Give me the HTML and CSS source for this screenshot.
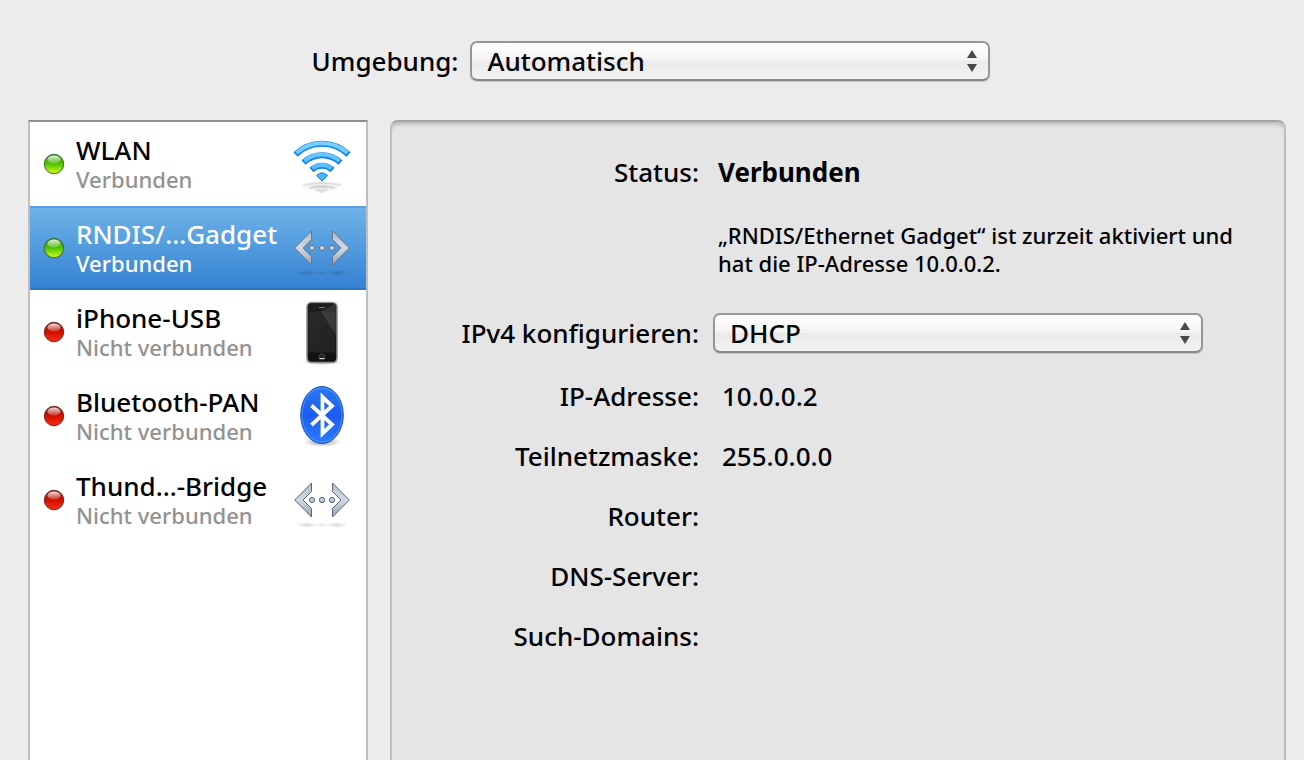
FILE: index.html
```html
<!DOCTYPE html>
<html lang="de">
<head>
<meta charset="utf-8">
<title>Netzwerk</title>
<link rel="stylesheet" href="styles.css">
</head>
<body>
<svg class="defs" aria-hidden="true">
  <defs>
    <linearGradient id="green" x1="0" y1="0" x2="0" y2="1"><stop offset="0" stop-color="#2f8d0c"/><stop offset=".5" stop-color="#4fc400"/><stop offset="1" stop-color="#d4ff1c"/></linearGradient>
    <linearGradient id="red" x1="0" y1="0" x2="0" y2="1"><stop offset="0" stop-color="#8e1410"/><stop offset=".5" stop-color="#d01000"/><stop offset="1" stop-color="#ff2a10"/></linearGradient>
    <linearGradient id="gloss" x1="0" y1="0" x2="0" y2="1"><stop offset="0" stop-color="#fff" stop-opacity=".85"/><stop offset="1" stop-color="#fff" stop-opacity=".15"/></linearGradient>
    <linearGradient id="steel" x1="0" y1="0" x2="0" y2="1"><stop offset="0" stop-color="#b4bdcb"/><stop offset=".5" stop-color="#d3d9e3"/><stop offset="1" stop-color="#98a4b8"/></linearGradient>
    <linearGradient id="sky" gradientUnits="userSpaceOnUse" x1="0" y1="13" x2="0" y2="53"><stop offset="0" stop-color="#7fd0ff"/><stop offset="1" stop-color="#46b4ff"/></linearGradient>
    <linearGradient id="blue" x1="0" y1="0" x2="0" y2="1"><stop offset="0" stop-color="#2b7af2"/><stop offset=".5" stop-color="#1c5cf0"/><stop offset="1" stop-color="#2e7dff"/></linearGradient>
    <linearGradient id="glass" x1="0" y1="0" x2="1" y2="1"><stop offset="0" stop-color="#2a2a2c"/><stop offset="1" stop-color="#202022"/></linearGradient>
    <radialGradient id="shade"><stop offset="0" stop-color="#000" stop-opacity=".4"/><stop offset="1" stop-color="#000" stop-opacity="0"/></radialGradient>
    <symbol id="dot-on" viewBox="0 0 24 24">
      <ellipse cx="12" cy="14" rx="11" ry="10" fill="url(#shade)"/>
      <circle cx="12" cy="12" r="9.7" fill="url(#green)" stroke="#3c6f2c"/>
      <ellipse cx="12" cy="7.5" rx="6.5" ry="4" fill="url(#gloss)"/>
    </symbol>
    <symbol id="dot-off" viewBox="0 0 24 24">
      <ellipse cx="12" cy="14" rx="11" ry="10" fill="url(#shade)"/>
      <circle cx="12" cy="12" r="9.7" fill="url(#red)" stroke="#6d2b26"/>
      <ellipse cx="12" cy="7.5" rx="6.5" ry="4" fill="url(#gloss)"/>
    </symbol>
    <symbol id="ethernet" viewBox="0 0 64 72">
      <ellipse cx="17" cy="61" rx="11" ry="3" fill="url(#shade)" opacity=".4"/>
      <ellipse cx="47" cy="61" rx="11" ry="3" fill="url(#shade)" opacity=".4"/>
      <ellipse cx="32" cy="61" rx="7" ry="2" fill="url(#shade)" opacity=".3"/>
      <g fill="url(#steel)" stroke="currentColor">
        <path d="M4.700 36 21.500 19v8.500L13 36l8.500 8.500V53Z"/>
        <path d="M59.300 36 42.500 19v8.500L51 36l-8.500 8.500V53Z"/>
        <circle cx="22" cy="36" r="2.600"/><circle cx="32" cy="36" r="2.600"/><circle cx="42" cy="36" r="2.600"/>
      </g>
    </symbol>
    <symbol id="updown" viewBox="0 0 12 24">
      <path fill="#484848" d="M6 1l5 8H1ZM6 23l5-8H1Z"/>
    </symbol>
  </defs>
</svg>

<main class="window">
  <div class="toolbar">
    <label for="location">Umgebung:</label>
    <div class="popup popup-location">
      <select id="location"><option>Automatisch</option></select>
      <svg class="popup-arrows" aria-hidden="true"><use href="#updown"/></svg>
    </div>
  </div>

  <div class="content">
    <nav class="services" aria-label="Dienste">
      <button class="service" type="button">
        <svg class="service-dot"><use href="#dot-on"/></svg>
        <span class="service-text"><span class="service-name">WLAN</span><span class="service-state">Verbunden</span></span>
        <svg class="service-icon" viewBox="0 0 64 72">
          <ellipse cx="32" cy="59" rx="20" ry="5" fill="url(#shade)" opacity=".3"/>
          <g fill="none" stroke="#000" opacity=".1">
            <path d="M13 57q19-4 38 0" stroke-width="2"/><path d="M19 60q13-3 26 0" stroke-width="2"/><path d="M26 62h12l-6 3Z" fill="#000"/>
          </g>
          <g fill="none" stroke="#0a84f5" stroke-width="6">
            <path d="M5.500 26.500A38 38 0 0 1 58.500 26.500"/><path d="M13.500 34.500A27 27 0 0 1 50.500 34.500"/><path d="M21.500 42A15 15 0 0 1 42.500 42"/>
          </g>
          <g fill="none" stroke="url(#sky)" stroke-width="4">
            <path d="M6.500 25A38 38 0 0 1 57.500 25"/><path d="M14.500 33A27 27 0 0 1 49.500 33"/><path d="M22.500 40.500A15 15 0 0 1 41.500 40.500"/>
          </g>
          <path d="M26.500 47.500Q32 42 37.500 47.500L32 53Z" fill="#46b4ff" stroke="#0a84f5"/>
        </svg>
      </button>
      <button class="service is-selected" type="button" aria-current="true">
        <svg class="service-dot"><use href="#dot-on"/></svg>
        <span class="service-text"><span class="service-name">RNDIS/…Gadget</span><span class="service-state">Verbunden</span></span>
        <svg class="service-icon"><use href="#ethernet"/></svg>
      </button>
      <button class="service" type="button">
        <svg class="service-dot"><use href="#dot-off"/></svg>
        <span class="service-text"><span class="service-name">iPhone-USB</span><span class="service-state">Nicht verbunden</span></span>
        <svg class="service-icon" viewBox="0 0 64 72">
          <ellipse cx="32" cy="66" rx="20" ry="3" fill="url(#shade)"/>
          <rect x="17" y="6.500" width="30" height="60" rx="4.500" fill="#111" stroke="#8d908d" stroke-width="1.600"/>
          <rect x="18" y="7.500" width="28" height="8" rx="3" fill="#1c1c1d"/>
          <rect x="18.500" y="15.500" width="27" height="41" fill="url(#glass)"/>
          <path d="M44 8h2v31L31 15.500Z" fill="#fff" opacity=".1"/>
          <path d="M29 11.500h6" stroke="#777"/>
          <circle cx="32" cy="61" r="3" fill="#222" stroke="#444"/>
          <path d="M29.500 62.500h5" stroke="#ccc"/>
        </svg>
      </button>
      <button class="service" type="button">
        <svg class="service-dot"><use href="#dot-off"/></svg>
        <span class="service-text"><span class="service-name">Bluetooth-PAN</span><span class="service-state">Nicht verbunden</span></span>
        <svg class="service-icon" viewBox="0 0 64 72">
          <ellipse cx="32" cy="62" rx="19" ry="5" fill="url(#shade)"/>
          <ellipse cx="32" cy="35" rx="21.300" ry="28.500" fill="url(#blue)" stroke="#1a58c8"/>
          <ellipse cx="32" cy="35" rx="20" ry="27" fill="none" stroke="#6ba6ff" opacity=".6"/>
          <path d="M21.500 25.500 42 44.500 32.500 53.500V17L42 26 21.500 45" fill="none" stroke="#fff" stroke-width="3.800"/>
        </svg>
      </button>
      <button class="service" type="button">
        <svg class="service-dot"><use href="#dot-off"/></svg>
        <span class="service-text"><span class="service-name">Thund…-Bridge</span><span class="service-state">Nicht verbunden</span></span>
        <svg class="service-icon"><use href="#ethernet"/></svg>
      </button>
    </nav>

    <section class="panel">
      <div class="status">
        <span class="label">Status:</span>
        <div class="status-text">
          <strong>Verbunden</strong>
          <p>„RNDIS/Ethernet Gadget“ ist zurzeit aktiviert und hat die IP-Adresse 10.0.0.2.</p>
        </div>
      </div>
      <div class="row">
        <label class="label" for="ipv4">IPv4 konfigurieren:</label>
        <div class="popup popup-ipv4">
          <select id="ipv4"><option>DHCP</option></select>
          <svg class="popup-arrows" aria-hidden="true"><use href="#updown"/></svg>
        </div>
      </div>
      <dl class="details">
        <div class="row"><dt class="label">IP-Adresse:</dt><dd>10.0.0.2</dd></div>
        <div class="row"><dt class="label">Teilnetzmaske:</dt><dd>255.0.0.0</dd></div>
        <div class="row"><dt class="label">Router:</dt><dd></dd></div>
        <div class="row"><dt class="label">DNS-Server:</dt><dd></dd></div>
        <div class="row"><dt class="label">Such-Domains:</dt><dd></dd></div>
      </dl>
    </section>
  </div>
</main>
</body>
</html>
```
FILE: styles.css
```css
* { box-sizing: border-box; }

body {
  margin: 0;
  background: #ececec;
  color: #000;
  font: 500 26px/32px "Noto Sans", "Open Sans", sans-serif;
}

.defs { position: absolute; width: 0; height: 0; }

.window {
  display: flex;
  flex-direction: column;
  min-height: 100vh;
}

.toolbar {
  display: flex;
  align-items: center;
  justify-content: center;
  gap: 12px;
  padding: 41px 2px 39px 0;
}

.popup { position: relative; }
.popup-location { width: 520px; }
.popup-ipv4 { width: 490px; margin-left: -5px; }

.popup select {
  display: block;
  width: 100%;
  height: 40px;
  padding: 0 40px 0 15px;
  appearance: none;
  border: 2px solid #979797;
  border-bottom-color: #868686;
  border-radius: 7px;
  background: linear-gradient(#fff, #f3f3f3 50%, #eaeaea 50%, #f2f2f2);
  box-shadow: 0 1px 1px rgba(0, 0, 0, .15);
  color: inherit;
  font: inherit;
}

.popup-arrows {
  position: absolute;
  top: 8px;
  right: 12px;
  width: 12px;
  height: 24px;
  pointer-events: none;
}

.content {
  display: flex;
  flex: 1;
  gap: 22px;
  padding: 0 18px 0 28px;
}

.services {
  flex: none;
  width: 340px;
  border: solid #bebebe;
  border-width: 2px 2px 0;
  border-top-color: #8e8e8e;
  background: #fff;
}

.service {
  display: flex;
  align-items: center;
  width: 100%;
  height: 84px;
  padding: 0 12px;
  border: 0;
  background: none;
  color: #56657f;
  font: inherit;
  text-align: left;
}

.service-dot { flex: none; width: 24px; height: 24px; }
.service-icon { flex: none; width: 64px; height: 72px; }

.service-text {
  display: flex;
  flex: 1;
  flex-direction: column;
  min-width: 0;
  padding-left: 10px;
  white-space: nowrap;
}

.service-name { color: #000; line-height: 30px; }
.service-state { color: #929292; font-size: 22px; line-height: 28px; }

.is-selected {
  background: linear-gradient(#6eb3e8, #3481d2);
  box-shadow: inset 0 2px #579fe0, inset 0 -2px #2f76c4;
  color: #6a7488;
}

.is-selected .service-name,
.is-selected .service-state { color: #fff; }

.panel {
  flex: 1;
  padding-top: 34px;
  border: solid #bdbdbd;
  border-width: 2px 2px 0;
  border-top-color: #a4a4a4;
  border-radius: 8px 8px 0 0;
  background: #e5e5e5;
  box-shadow: inset 0 5px 4px -3px rgba(0, 0, 0, .22);
}

.status,
.row {
  display: grid;
  grid-template-columns: 307px 1fr;
  column-gap: 19px;
}

.row { align-items: center; }
.label { text-align: right; }

.status-text p {
  margin: 33px 40px 36px 0;
  font-size: 22px;
  line-height: 28px;
}

.details { margin: 13px 0 0; }
.details .row { height: 60px; }
.details dd { margin: 0 0 0 4px; }
```
